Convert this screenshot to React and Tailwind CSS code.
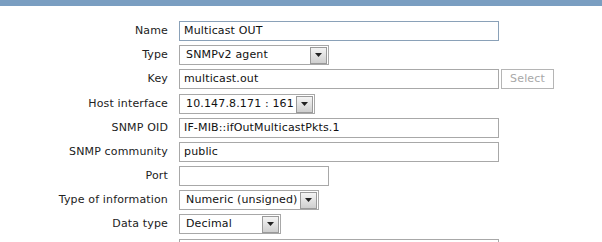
import React from 'react';

const rows = [
  { label: 'Name', kind: 'input', value: 'Multicast OUT', w: 'w-[320px]', focus: true },
  { label: 'Type', kind: 'select', value: 'SNMPv2 agent', w: 'w-[150px]' },
  { label: 'Key', kind: 'input', value: 'multicast.out', w: 'w-[320px]', button: 'Select', h: 'h-[25px]' },
  { label: 'Host interface', kind: 'select', value: '10.147.8.171 : 161', w: 'w-[136px]' },
  { label: 'SNMP OID', kind: 'input', value: 'IF-MIB::ifOutMulticastPkts.1', w: 'w-[320px]' },
  { label: 'SNMP community', kind: 'input', value: 'public', w: 'w-[320px]' },
  { label: 'Port', kind: 'input', value: '', w: 'w-[150px]' },
  { label: 'Type of information', kind: 'select', value: 'Numeric (unsigned)', w: 'w-[140px]' },
  { label: 'Data type', kind: 'select', value: 'Decimal', w: 'w-[102px]', h: 'h-[25px]' },
  { label: '', kind: 'input', value: '', w: 'w-[320px]' },
];

function Arrow() {
  return (
    <div className="flex h-[17px] w-[17px] shrink-0 items-center justify-center border border-[#9a9a9a] bg-gradient-to-b from-[#f4f4f4] to-[#cfcfcf]">
      <svg width="7" height="4" viewBox="0 0 7 4">
        <path d="M0 0h7L3.5 4z" fill="#222" />
      </svg>
    </div>
  );
}

function Field({ row }) {
  if (row.kind === 'select') {
    return (
      <div className={`flex h-[20px] items-center border border-[#a8a8a8] bg-white pl-[6px] pr-px ${row.w}`}>
        <span className="min-w-0 flex-1 whitespace-nowrap pt-px">{row.value}</span>
        <Arrow />
      </div>
    );
  }
  return (
    <div className="flex items-center gap-[2px]">
      <div
        className={`flex h-[20px] items-center border bg-white pl-[4px] pt-px ${row.w} ${
          row.focus ? 'border-[#8aa1b8]' : 'border-[#a8a8a8]'
        }`}
      >
        {row.value}
      </div>
      {row.button && (
        <div className="flex h-[20px] w-[53px] items-center justify-center border border-[#b5b5b5] bg-white pt-px text-[#a8a8a8]">
          {row.button}
        </div>
      )}
    </div>
  );
}

export default function App() {
  return (
    <div className="h-[242px] w-[602px] overflow-hidden bg-white text-[11px] tracking-[0.15px] text-[#111] [font-family:'DejaVu_Sans',Verdana,sans-serif]">
      <div className="h-[6px] bg-[#7a9ec1]" />
      <div className="flex flex-col pt-[15px]">
        {rows.map((row, i) => (
          <div key={i} className={`flex shrink-0 items-start ${row.h || 'h-[24px]'}`}>
            <div className="flex h-[20px] w-[168px] items-center justify-end pt-px text-[#222]">{row.label}</div>
            <div className="ml-[11px]">
              <Field row={row} />
            </div>
          </div>
        ))}
      </div>
    </div>
  );
}
